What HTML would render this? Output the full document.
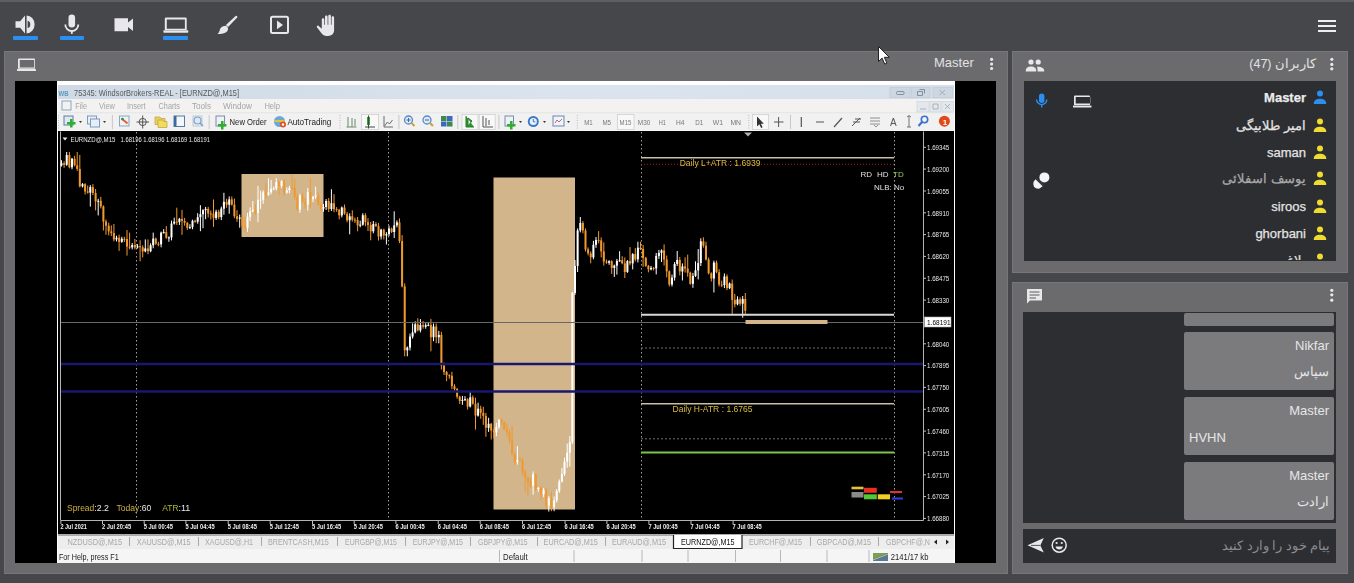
<!DOCTYPE html>
<html><head><meta charset="utf-8">
<style>
*{margin:0;padding:0;box-sizing:border-box}
html,body{width:1354px;height:583px;overflow:hidden;background:#46474b;font-family:"Liberation Sans",sans-serif}
.abs{position:absolute}
#topline{left:0;top:0;width:1354px;height:2px;background:#5d5e61}
.uline{height:4px;background:#2a8ff0;border-radius:1px}
.panel{background:#6b6b6e;border:1px solid #77777a}
.inner{background:#2d2e32}
.txt{color:#e6e6e6;white-space:nowrap}
.msg{background:#7b7b7e;border-radius:2px}
</style></head><body>
<div class="abs" id="topline"></div>

<!-- TOP BAR ICONS -->
<svg class="abs" style="left:0;top:0" width="400" height="50" viewBox="0 0 400 50">
 <g fill="#e8e8ea">
  <!-- speaker -->
  <path d="M15.5 21.3H20.2L25 15.6V33.4L20.2 27.8H15.5Z"/>
  <path d="M26.6 15.4A8 9 0 0 1 26.6 33.4Z M27.6 20.8A3.2 3.7 0 0 1 27.6 28.1Z" fill-rule="evenodd"/>
  <!-- mic -->
  <rect x="68.5" y="14.6" width="6.6" height="13" rx="3.3"/>
  <path d="M65.3 24.5a6.5 6.5 0 0 0 13 0" fill="none" stroke="#e8e8ea" stroke-width="1.8"/>
  <rect x="70.9" y="30.5" width="1.8" height="3.4"/>
  <!-- video -->
  <path d="M114.5 18.3h13.5v4.2l5-4v12.6l-5-4v4.1h-13.5z"/>
  <!-- laptop -->
  <path d="M166 17.5h19.5a1.2 1.2 0 0 1 1.2 1.2v11.2h-21.9v-11.2a1.2 1.2 0 0 1 1.2-1.2z M166.8 19.4v9.4h18.1v-9.4z" fill-rule="evenodd"/>
  <rect x="163.4" y="30.3" width="24.9" height="2.4" rx="0.6"/>
  <!-- brush -->
  <path d="M235.6 15.9c.9-.6 2.2.6 1.6 1.5l-9.1 9.7-2.2-2.1z"/>
  <path d="M224.7 25.9c1.9-.3 3.6 1.4 3.3 3.3-.4 2.8-3.4 4.8-10.5 4.8 2-1.4 1.9-3.5 2.8-5.4.7-1.5 2.5-2.5 4.4-2.7z"/>
  <!-- play box -->
  <rect x="271" y="16.7" width="17" height="16.4" rx="1.5" fill="none" stroke="#e8e8ea" stroke-width="2"/>
  <path d="M277 20.5l6 4.4-6 4.4z"/>
  <!-- hand -->
  <path transform="translate(1.5 0)" d="M320.3 28.8v-9.2c0-1.9 2.5-1.9 2.5 0v5.2h.7v-8c0-1.9 2.6-1.9 2.6 0v8h.7v-8.7c0-1.9 2.6-1.9 2.6 0v8.7h.7v-7.2c0-1.9 2.5-1.9 2.5 0v12.7c0 3.4-2.6 5.7-6 5.7h-1.6c-2 0-3.6-.8-4.8-2.4l-4.6-6.1c-.8-1.2.5-2.5 1.6-1.6z"/>
 </g>
</svg>
<div class="abs uline" style="left:13px;top:36px;width:25px"></div>
<div class="abs uline" style="left:60px;top:36px;width:24px"></div>
<div class="abs uline" style="left:163px;top:36px;width:25px"></div>
<!-- hamburger -->
<div class="abs" style="left:1318px;top:20px;width:18px;height:2px;background:#eee"></div>
<div class="abs" style="left:1318px;top:25px;width:18px;height:2px;background:#eee"></div>
<div class="abs" style="left:1318px;top:30px;width:18px;height:2px;background:#eee"></div>

<!-- MAIN PANEL -->
<div class="abs panel" style="left:4px;top:51px;width:1004px;height:523px"></div>
<svg class="abs" style="left:16px;top:56px" width="22" height="18" viewBox="0 0 22 18">
 <path d="M3 2.5h15a1 1 0 0 1 1 1v9.2h-17v-9.2a1 1 0 0 1 1-1z M3.8 4v7.4h14.4v-7.4z" fill="#e8e8ea" fill-rule="evenodd"/>
 <rect x="1" y="13" width="19" height="2" rx="0.5" fill="#e8e8ea"/>
</svg>
<div class="abs txt" style="left:934px;top:55px;font-size:13px;color:#e2e2e4">Master</div>
<svg class="abs" style="left:988px;top:56px" width="8" height="16"><g fill="#e8e8ea"><circle cx="3.6" cy="3.3" r="1.6"/><circle cx="3.6" cy="8" r="1.6"/><circle cx="3.6" cy="12.5" r="1.6"/></g></svg>
<div class="abs" style="left:15px;top:81px;width:981px;height:482px;background:#000"></div>

<!-- MT4 -->
<div class="abs" id="mt4" style="left:57px;top:81px;width:898px;height:482px;background:#fff;overflow:hidden;filter:blur(0.35px)">
<svg width="898" height="482" viewBox="57 81 898 482" style="position:absolute;left:0;top:0;font-family:'Liberation Sans',sans-serif">
<defs>
 <linearGradient id="tg" x1="0" x2="1" y1="0" y2="0"><stop offset="0" stop-color="#cfdae6"/><stop offset="0.6" stop-color="#dbe4ee"/><stop offset="1" stop-color="#d5dfea"/></linearGradient>
</defs>
<rect x="57" y="81" width="898" height="482" fill="#ffffff"/>
<!-- title bar -->
<rect x="58" y="85" width="896" height="14" fill="url(#tg)"/>
<text x="58.5" y="95.5" font-size="8" fill="#5a9ab8" font-weight="bold" textLength="10" lengthAdjust="spacingAndGlyphs">WB</text>
<text x="74" y="96" font-size="9.5" fill="#585858" textLength="165" lengthAdjust="spacingAndGlyphs">75345: WindsorBrokers-REAL - [EURNZD@,M15]</text>
<g fill="#cdd7e2" stroke="#bcc6d2" stroke-width="0.6">
 <rect x="890" y="87.3" width="20" height="10.5"/>
 <rect x="911.5" y="87.3" width="18.5" height="10.5"/>
 <rect x="933" y="87.3" width="19.5" height="10.5"/>
</g>
<rect x="896.5" y="91.5" width="7.5" height="3" rx="1" fill="none" stroke="#7d8896" stroke-width="0.9"/>
<path d="M917.5 91.5h5v4h-5z M919.5 89.5h5v4" fill="none" stroke="#7d8896" stroke-width="0.9"/>
<path d="M939.5 90l5.5 5M945 90l-5.5 5" stroke="#a5adb7" stroke-width="1"/>
<!-- menu bar -->
<rect x="58" y="99" width="896" height="13.5" fill="#f3f2f1"/>
<rect x="62" y="101" width="9" height="9" fill="none" stroke="#8aa6c4" stroke-width="1"/>
<g font-size="9.5" fill="#a5a5a5">
 <text x="75.3" y="109" textLength="11.7" lengthAdjust="spacingAndGlyphs">File</text><text x="99" y="109" textLength="16" lengthAdjust="spacingAndGlyphs">View</text><text x="127" y="109" textLength="18.6" lengthAdjust="spacingAndGlyphs">Insert</text><text x="158.6" y="109" textLength="21.4" lengthAdjust="spacingAndGlyphs">Charts</text><text x="192" y="109" textLength="19" lengthAdjust="spacingAndGlyphs">Tools</text><text x="223" y="109" textLength="29" lengthAdjust="spacingAndGlyphs">Window</text><text x="264.4" y="109" textLength="15.6" lengthAdjust="spacingAndGlyphs">Help</text>
</g>
<g fill="#e4e8ee" stroke="#c8d0da" stroke-width="0.6">
 <rect x="917" y="101.5" width="12" height="10.5"/><rect x="930" y="101.5" width="11" height="10.5"/><rect x="942" y="101.5" width="11.5" height="10.5"/>
</g>
<path d="M920 109h6M933 104h5v5h-5zM945 104l5 5M950 104l-5 5" stroke="#9aa3ad" stroke-width="0.8" fill="none"/>
<rect x="58" y="112.5" width="896" height="1" fill="#d8d8d8"/>
<!-- toolbar -->
<rect x="58" y="113.5" width="896" height="17" fill="#f1f1f1"/>
<g stroke="#bbb" stroke-width="1" stroke-dasharray="1 1.5"><line x1="58.5" y1="115" x2="58.5" y2="129"/><line x1="340" y1="115" x2="340" y2="129"/><line x1="577.3" y1="115" x2="577.3" y2="129"/><line x1="748.8" y1="115" x2="748.8" y2="129"/></g>
<g stroke="#c8c8c8" stroke-width="1"><line x1="112.4" y1="115" x2="112.4" y2="129"/><line x1="209.2" y1="115" x2="209.2" y2="129"/><line x1="398.9" y1="115" x2="398.9" y2="129"/><line x1="457.8" y1="115" x2="457.8" y2="129"/><line x1="498.9" y1="115" x2="498.9" y2="129"/><line x1="790.5" y1="115" x2="790.5" y2="129"/></g>
<!-- pressed boxes -->
<g fill="#f8f8f8" stroke="#cfcfcf" stroke-width="0.8">
<rect x="361.4" y="114.5" width="17.2" height="15"/><rect x="462" y="114.5" width="16" height="15"/><rect x="479.2" y="114.5" width="16" height="15"/><rect x="617.5" y="114.5" width="16.5" height="15"/><rect x="752.4" y="114.5" width="16" height="15"/>
</g>
<!-- icon1 new chart -->
<rect x="64" y="116" width="9" height="9" fill="#dfe9f3" stroke="#5c7fa8" stroke-width="1"/>
<path d="M70 119h2.5v3h3v2.5h-3v3H70v-3h-3v-2.5h3z" fill="#2fae2f"/>
<path d="M79 121h3l-1.5 2z M103 121h3l-1.5 2z M519 121h3l-1.5 2z M543 121h3l-1.5 2z M567 121h3l-1.5 2z" fill="#333"/>
<rect x="87.5" y="116" width="9" height="8" fill="#e7eef6" stroke="#7d9ac0" stroke-width="1"/>
<rect x="90.5" y="119" width="9" height="8" fill="#e7eef6" stroke="#7d9ac0" stroke-width="1"/>
<rect x="119.5" y="116" width="9.5" height="10" fill="#eef3f8" stroke="#8aa5c4" stroke-width="1"/>
<path d="M121.5 118.5l6 5" stroke="#e5602a" stroke-width="2"/><circle cx="122.5" cy="119" r="1.3" fill="#2a9a3a"/>
<path d="M142.7 115.5v13M136.5 122h12.5" stroke="#555" stroke-width="1"/><circle cx="142.7" cy="122" r="3.6" fill="none" stroke="#555" stroke-width="1"/>
<path d="M155 117h5l1 1.5h4v6h-10z" fill="#e8d060" stroke="#c0a030" stroke-width="0.7"/><path d="M158 120h5l1 1.5h3v6h-9z" fill="#f0dc60" stroke="#c0a030" stroke-width="0.7"/>
<rect x="174" y="116" width="10.5" height="10.5" fill="#f4f7fa" stroke="#5a7aa0" stroke-width="1"/><rect x="174" y="116" width="2.5" height="10.5" fill="#3d6aa0"/>
<circle cx="197.5" cy="120.5" r="3.5" fill="#dce8f4" stroke="#7aa0c8" stroke-width="1.2"/><path d="M200 123l3 3" stroke="#7aa0c8" stroke-width="1.6"/><rect x="193" y="116" width="9" height="10" fill="none" stroke="#9ab0c8" stroke-width="0.6"/>
<!-- new order -->
<rect x="216" y="116" width="8.5" height="10" fill="#eef1f5" stroke="#7a8ea8" stroke-width="1"/>
<path d="M221 121h2.5v3h3v2.5h-3v3H221v-3h-3v-2.5h3z" fill="#2fae2f"/>
<text x="229.6" y="125" font-size="9.5" fill="#222" textLength="37" lengthAdjust="spacingAndGlyphs">New Order</text>
<circle cx="279.5" cy="121.5" r="5.5" fill="#6aa8d8"/><path d="M274.5 121h10" stroke="#e8c040" stroke-width="2"/><circle cx="283" cy="124.5" r="3" fill="#e05020"/><circle cx="283" cy="124.5" r="1.2" fill="#fff"/>
<text x="287.4" y="125" font-size="9.5" fill="#222" textLength="44" lengthAdjust="spacingAndGlyphs">AutoTrading</text>
<!-- chart types -->
<path d="M348 117v10M352 118v9M355 119v7M346.5 127h10" stroke="#6a8a6a" stroke-width="1" fill="none"/>
<rect x="367" y="117" width="3" height="8" fill="#30a030"/><path d="M368.5 115.5v13M365 127h10" stroke="#444" stroke-width="1"/>
<path d="M384 116v11h9M384.5 126l3-4 2 2 3-4" stroke="#6a6a6a" stroke-width="1" fill="none"/>
<circle cx="408.5" cy="120" r="4" fill="#dbe8f6" stroke="#5a8ac8" stroke-width="1.3"/><path d="M411.5 123l3 3" stroke="#d0a030" stroke-width="2"/><path d="M406.5 120h4M408.5 118v4" stroke="#3a6ab0" stroke-width="1"/>
<circle cx="427" cy="120" r="4" fill="#dbe8f6" stroke="#5a8ac8" stroke-width="1.3"/><path d="M430 123l3 3" stroke="#d0a030" stroke-width="2"/><path d="M425 120h4" stroke="#3a6ab0" stroke-width="1"/>
<rect x="441" y="116" width="5.5" height="5" fill="#3a8a4a"/><rect x="447" y="116" width="5.5" height="5" fill="#3a6ac0"/><rect x="441" y="121.5" width="5.5" height="5" fill="#3a6ac0"/><rect x="447" y="121.5" width="5.5" height="5" fill="#3a8a4a"/>
<path d="M466 116v11h8M468 126v-8l4 3z" stroke="#2a7a2a" stroke-width="1" fill="#2a9a2a"/>
<path d="M483 116v11h10M486 118v8M489 120v5" stroke="#555" stroke-width="1" fill="none"/>
<!-- new doc / clock / template -->
<rect x="505" y="116" width="8.5" height="10" fill="#eef1f5" stroke="#7a8ea8" stroke-width="1"/>
<path d="M510 121h2.5v3h3v2.5h-3v3H510v-3h-3v-2.5h3z" fill="#2fae2f"/>
<circle cx="533.3" cy="121.5" r="5.5" fill="#3a78c8"/><circle cx="533.3" cy="121.5" r="3.6" fill="#e8f0fa"/><path d="M533.3 119v2.8h2" stroke="#3a78c8" stroke-width="1" fill="none"/>
<rect x="553" y="116" width="11" height="10" fill="#f0f4f8" stroke="#6a88b0" stroke-width="1"/><path d="M555 123l2-3 2 2 3-3" stroke="#c04040" stroke-width="0.8" fill="none"/>
<!-- timeframes -->
<g font-size="8" fill="#777">
<text x="584.2" y="124.5" textLength="8.5" lengthAdjust="spacingAndGlyphs">M1</text><text x="602.4" y="124.5" textLength="8.6" lengthAdjust="spacingAndGlyphs">M5</text><text x="619.6" y="124.5" textLength="11.8" lengthAdjust="spacingAndGlyphs">M15</text><text x="637.8" y="124.5" textLength="12.5" lengthAdjust="spacingAndGlyphs">M30</text><text x="658.8" y="124.5" textLength="7.2" lengthAdjust="spacingAndGlyphs">H1</text><text x="676" y="124.5" textLength="8.5" lengthAdjust="spacingAndGlyphs">H4</text><text x="695.2" y="124.5" textLength="8" lengthAdjust="spacingAndGlyphs">D1</text><text x="712.8" y="124.5" textLength="10.2" lengthAdjust="spacingAndGlyphs">W1</text><text x="730.4" y="124.5" textLength="10.6" lengthAdjust="spacingAndGlyphs">MN</text>
</g>
<path d="M757 116.5v10l2.3-2.2 1.8 3.6 1.5-.7-1.7-3.5h3z" fill="#333"/>
<path d="M778.6 117v10M774 122h9.5" stroke="#555" stroke-width="1"/>
<path d="M801.3 117v10M816 122h8M834 127l8-9" stroke="#555" stroke-width="1.2"/>
<path d="M852 126l8-8M853 122h7M855 119h6" stroke="#555" stroke-width="1"/>
<path d="M870 118h10M870 121h10M870 124h10M874 125l2 2 2-2" stroke="#777" stroke-width="0.8" fill="none"/>
<text x="890" y="126" font-size="10" fill="#555">A</text>
<path d="M907 117l2-1.5 2 1.5M909 116v11M907 127h4" stroke="#666" stroke-width="0.9" fill="none"/>
<circle cx="924.5" cy="119.5" r="3.2" fill="none" stroke="#3a70d0" stroke-width="1.6"/><path d="M922 122l-3.5 4" stroke="#3a70d0" stroke-width="2"/>
<circle cx="944.4" cy="121.2" r="5.5" fill="#e04a1a"/><text x="942.8" y="124.5" font-size="8" font-weight="bold" fill="#fff">1</text>

<!-- chart -->
<rect x="58" y="131" width="896" height="403" fill="#000"/>
<path d="M60.5 131.5V520.5H923.5V131.5" fill="none" stroke="#b4b4b4" stroke-width="1"/>
<!-- dotted verticals -->
<g stroke="#a0a0a0" stroke-width="1" stroke-dasharray="1.5 2.5">
 <line x1="136.5" y1="132" x2="136.5" y2="520"/><line x1="388.5" y1="132" x2="388.5" y2="520"/><line x1="641.5" y1="132" x2="641.5" y2="520"/><line x1="894.5" y1="132" x2="894.5" y2="520"/>
</g>
<!-- tan rects -->
<rect x="241.5" y="174" width="82" height="63" fill="#d3b58c"/>
<rect x="493.5" y="177.5" width="81.5" height="332" fill="#d3b58c"/>
<!-- candles -->
<rect x="61.0" y="160.2" width="1" height="6.3" fill="#ffffff"/>
<rect x="60.5" y="163.2" width="2" height="2.3" fill="#ffffff"/>
<rect x="63.6" y="161.2" width="1" height="6.6" fill="#f0992e"/>
<rect x="63.1" y="163.2" width="2" height="1.6" fill="#f0992e"/>
<rect x="66.2" y="152.0" width="1" height="13.8" fill="#ffffff"/>
<rect x="65.7" y="155.0" width="2" height="9.9" fill="#ffffff"/>
<rect x="68.9" y="152.0" width="1" height="16.3" fill="#f0992e"/>
<rect x="68.4" y="155.0" width="2" height="12.3" fill="#f0992e"/>
<rect x="71.5" y="157.8" width="1" height="11.5" fill="#ffffff"/>
<rect x="71.0" y="158.8" width="2" height="8.5" fill="#ffffff"/>
<rect x="74.1" y="155.8" width="1" height="10.5" fill="#f0992e"/>
<rect x="73.6" y="158.8" width="2" height="6.5" fill="#f0992e"/>
<rect x="76.7" y="152.0" width="1" height="18.9" fill="#f0992e"/>
<rect x="76.2" y="165.3" width="2" height="3.6" fill="#f0992e"/>
<rect x="79.3" y="154.9" width="1" height="32.5" fill="#f0992e"/>
<rect x="78.8" y="168.9" width="2" height="17.5" fill="#f0992e"/>
<rect x="82.0" y="183.1" width="1" height="4.3" fill="#ffffff"/>
<rect x="81.5" y="184.1" width="2" height="2.3" fill="#ffffff"/>
<rect x="84.6" y="183.1" width="1" height="11.4" fill="#f0992e"/>
<rect x="84.1" y="184.1" width="2" height="7.4" fill="#f0992e"/>
<rect x="87.2" y="185.5" width="1" height="8.1" fill="#f0992e"/>
<rect x="86.7" y="191.5" width="2" height="1.1" fill="#f0992e"/>
<rect x="89.8" y="185.1" width="1" height="21.5" fill="#ffffff"/>
<rect x="89.3" y="187.1" width="2" height="5.5" fill="#ffffff"/>
<rect x="92.4" y="184.1" width="1" height="10.9" fill="#f0992e"/>
<rect x="91.9" y="187.1" width="2" height="5.9" fill="#f0992e"/>
<rect x="95.1" y="189.0" width="1" height="21.4" fill="#f0992e"/>
<rect x="94.6" y="193.0" width="2" height="8.4" fill="#f0992e"/>
<rect x="97.7" y="198.8" width="1" height="16.6" fill="#ffffff"/>
<rect x="97.2" y="200.8" width="2" height="1.0" fill="#ffffff"/>
<rect x="100.3" y="196.8" width="1" height="11.6" fill="#f0992e"/>
<rect x="99.8" y="200.8" width="2" height="5.6" fill="#f0992e"/>
<rect x="102.9" y="205.4" width="1" height="25.1" fill="#f0992e"/>
<rect x="102.4" y="206.4" width="2" height="15.1" fill="#f0992e"/>
<rect x="105.5" y="219.5" width="1" height="15.2" fill="#f0992e"/>
<rect x="105.0" y="221.5" width="2" height="4.2" fill="#f0992e"/>
<rect x="108.2" y="222.7" width="1" height="12.7" fill="#f0992e"/>
<rect x="107.7" y="225.7" width="2" height="5.7" fill="#f0992e"/>
<rect x="110.8" y="225.4" width="1" height="10.7" fill="#f0992e"/>
<rect x="110.3" y="231.4" width="2" height="1.7" fill="#f0992e"/>
<rect x="113.4" y="224.0" width="1" height="17.4" fill="#f0992e"/>
<rect x="112.9" y="233.0" width="2" height="6.4" fill="#f0992e"/>
<rect x="116.0" y="235.7" width="1" height="5.7" fill="#ffffff"/>
<rect x="115.5" y="237.7" width="2" height="1.7" fill="#ffffff"/>
<rect x="118.6" y="234.7" width="1" height="16.2" fill="#f0992e"/>
<rect x="118.1" y="237.7" width="2" height="4.2" fill="#f0992e"/>
<rect x="121.3" y="236.8" width="1" height="6.0" fill="#ffffff"/>
<rect x="120.8" y="238.8" width="2" height="3.0" fill="#ffffff"/>
<rect x="123.9" y="236.8" width="1" height="5.2" fill="#f0992e"/>
<rect x="123.4" y="238.8" width="2" height="1.0" fill="#f0992e"/>
<rect x="126.5" y="230.0" width="1" height="25.6" fill="#f0992e"/>
<rect x="126.0" y="239.0" width="2" height="7.6" fill="#f0992e"/>
<rect x="129.1" y="232.6" width="1" height="16.7" fill="#f0992e"/>
<rect x="128.6" y="246.6" width="2" height="1.0" fill="#f0992e"/>
<rect x="131.7" y="243.0" width="1" height="6.4" fill="#ffffff"/>
<rect x="131.2" y="245.0" width="2" height="2.4" fill="#ffffff"/>
<rect x="134.4" y="239.0" width="1" height="10.5" fill="#f0992e"/>
<rect x="133.9" y="245.0" width="2" height="2.5" fill="#f0992e"/>
<rect x="137.0" y="244.2" width="1" height="4.3" fill="#ffffff"/>
<rect x="136.5" y="246.2" width="2" height="1.3" fill="#ffffff"/>
<rect x="139.6" y="240.2" width="1" height="21.1" fill="#f0992e"/>
<rect x="139.1" y="246.2" width="2" height="1.1" fill="#f0992e"/>
<rect x="142.2" y="245.3" width="1" height="12.1" fill="#f0992e"/>
<rect x="141.7" y="247.3" width="2" height="4.1" fill="#f0992e"/>
<rect x="144.8" y="239.4" width="1" height="12.9" fill="#ffffff"/>
<rect x="144.3" y="248.4" width="2" height="2.9" fill="#ffffff"/>
<rect x="147.5" y="239.4" width="1" height="14.8" fill="#f0992e"/>
<rect x="147.0" y="248.4" width="2" height="2.8" fill="#f0992e"/>
<rect x="150.1" y="243.3" width="1" height="8.9" fill="#ffffff"/>
<rect x="149.6" y="245.3" width="2" height="5.9" fill="#ffffff"/>
<rect x="152.7" y="232.6" width="1" height="15.7" fill="#ffffff"/>
<rect x="152.2" y="238.6" width="2" height="6.7" fill="#ffffff"/>
<rect x="155.3" y="237.6" width="1" height="7.2" fill="#f0992e"/>
<rect x="154.8" y="238.6" width="2" height="5.2" fill="#f0992e"/>
<rect x="157.9" y="241.8" width="1" height="4.5" fill="#f0992e"/>
<rect x="157.4" y="243.8" width="2" height="1.0" fill="#f0992e"/>
<rect x="160.6" y="231.6" width="1" height="15.7" fill="#ffffff"/>
<rect x="160.1" y="232.6" width="2" height="11.7" fill="#ffffff"/>
<rect x="163.2" y="229.1" width="1" height="4.5" fill="#ffffff"/>
<rect x="162.7" y="232.1" width="2" height="1.0" fill="#ffffff"/>
<rect x="165.8" y="226.1" width="1" height="12.7" fill="#f0992e"/>
<rect x="165.3" y="232.1" width="2" height="5.7" fill="#f0992e"/>
<rect x="168.4" y="236.4" width="1" height="5.4" fill="#ffffff"/>
<rect x="167.9" y="237.4" width="2" height="1.0" fill="#ffffff"/>
<rect x="171.0" y="220.6" width="1" height="19.8" fill="#ffffff"/>
<rect x="170.5" y="223.6" width="2" height="13.8" fill="#ffffff"/>
<rect x="173.7" y="217.7" width="1" height="6.9" fill="#ffffff"/>
<rect x="173.2" y="221.7" width="2" height="1.9" fill="#ffffff"/>
<rect x="176.3" y="207.7" width="1" height="17.3" fill="#f0992e"/>
<rect x="175.8" y="221.7" width="2" height="1.0" fill="#f0992e"/>
<rect x="178.9" y="217.9" width="1" height="7.1" fill="#ffffff"/>
<rect x="178.4" y="218.9" width="2" height="3.1" fill="#ffffff"/>
<rect x="181.5" y="209.9" width="1" height="25.0" fill="#f0992e"/>
<rect x="181.0" y="218.9" width="2" height="2.0" fill="#f0992e"/>
<rect x="184.1" y="217.9" width="1" height="7.9" fill="#f0992e"/>
<rect x="183.6" y="220.9" width="2" height="1.9" fill="#f0992e"/>
<rect x="186.8" y="221.9" width="1" height="8.0" fill="#f0992e"/>
<rect x="186.3" y="222.9" width="2" height="5.0" fill="#f0992e"/>
<rect x="189.4" y="224.2" width="1" height="4.7" fill="#ffffff"/>
<rect x="188.9" y="227.2" width="2" height="1.0" fill="#ffffff"/>
<rect x="192.0" y="219.7" width="1" height="9.5" fill="#ffffff"/>
<rect x="191.5" y="220.7" width="2" height="6.5" fill="#ffffff"/>
<rect x="194.6" y="219.7" width="1" height="3.1" fill="#f0992e"/>
<rect x="194.1" y="220.7" width="2" height="1.1" fill="#f0992e"/>
<rect x="197.2" y="213.2" width="1" height="10.5" fill="#ffffff"/>
<rect x="196.7" y="217.2" width="2" height="4.5" fill="#ffffff"/>
<rect x="199.9" y="205.2" width="1" height="26.0" fill="#ffffff"/>
<rect x="199.4" y="214.2" width="2" height="3.0" fill="#ffffff"/>
<rect x="202.5" y="209.2" width="1" height="19.0" fill="#ffffff"/>
<rect x="202.0" y="210.2" width="2" height="4.0" fill="#ffffff"/>
<rect x="205.1" y="206.9" width="1" height="12.3" fill="#ffffff"/>
<rect x="204.6" y="208.9" width="2" height="1.3" fill="#ffffff"/>
<rect x="207.7" y="206.9" width="1" height="10.6" fill="#f0992e"/>
<rect x="207.2" y="208.9" width="2" height="4.6" fill="#f0992e"/>
<rect x="210.3" y="210.5" width="1" height="9.0" fill="#f0992e"/>
<rect x="209.8" y="213.5" width="2" height="1.0" fill="#f0992e"/>
<rect x="213.0" y="199.5" width="1" height="27.4" fill="#f0992e"/>
<rect x="212.5" y="213.5" width="2" height="4.4" fill="#f0992e"/>
<rect x="215.6" y="209.7" width="1" height="10.3" fill="#ffffff"/>
<rect x="215.1" y="211.7" width="2" height="6.3" fill="#ffffff"/>
<rect x="218.2" y="209.7" width="1" height="9.5" fill="#f0992e"/>
<rect x="217.7" y="211.7" width="2" height="5.5" fill="#f0992e"/>
<rect x="220.8" y="206.6" width="1" height="13.5" fill="#ffffff"/>
<rect x="220.3" y="208.6" width="2" height="8.5" fill="#ffffff"/>
<rect x="223.4" y="192.8" width="1" height="21.9" fill="#ffffff"/>
<rect x="222.9" y="201.8" width="2" height="6.9" fill="#ffffff"/>
<rect x="226.1" y="198.8" width="1" height="9.0" fill="#f0992e"/>
<rect x="225.6" y="201.8" width="2" height="3.0" fill="#f0992e"/>
<rect x="228.7" y="196.4" width="1" height="17.3" fill="#ffffff"/>
<rect x="228.2" y="199.4" width="2" height="5.3" fill="#ffffff"/>
<rect x="231.3" y="196.4" width="1" height="9.2" fill="#f0992e"/>
<rect x="230.8" y="199.4" width="2" height="5.2" fill="#f0992e"/>
<rect x="233.9" y="198.6" width="1" height="19.6" fill="#f0992e"/>
<rect x="233.4" y="204.6" width="2" height="11.6" fill="#f0992e"/>
<rect x="236.5" y="210.2" width="1" height="11.6" fill="#f0992e"/>
<rect x="236.0" y="216.2" width="2" height="2.6" fill="#f0992e"/>
<rect x="239.2" y="214.5" width="1" height="13.2" fill="#ffffff"/>
<rect x="238.7" y="217.5" width="2" height="1.2" fill="#ffffff"/>
<rect x="241.8" y="214.5" width="1" height="14.2" fill="#f0992e"/>
<rect x="241.3" y="217.5" width="2" height="8.2" fill="#f0992e"/>
<rect x="244.4" y="216.7" width="1" height="15.1" fill="#f0992e"/>
<rect x="243.9" y="225.7" width="2" height="2.1" fill="#f0992e"/>
<rect x="247.0" y="212.8" width="1" height="19.0" fill="#ffffff"/>
<rect x="246.5" y="216.8" width="2" height="11.0" fill="#ffffff"/>
<rect x="249.6" y="207.3" width="1" height="13.6" fill="#ffffff"/>
<rect x="249.1" y="211.3" width="2" height="5.6" fill="#ffffff"/>
<rect x="252.3" y="201.0" width="1" height="11.3" fill="#ffffff"/>
<rect x="251.8" y="210.0" width="2" height="1.3" fill="#ffffff"/>
<rect x="254.9" y="204.0" width="1" height="11.0" fill="#f0992e"/>
<rect x="254.4" y="210.0" width="2" height="3.0" fill="#f0992e"/>
<rect x="257.5" y="185.9" width="1" height="36.2" fill="#ffffff"/>
<rect x="257.0" y="199.9" width="2" height="13.2" fill="#ffffff"/>
<rect x="260.1" y="190.7" width="1" height="18.2" fill="#ffffff"/>
<rect x="259.6" y="199.7" width="2" height="1.0" fill="#ffffff"/>
<rect x="262.7" y="190.3" width="1" height="13.4" fill="#ffffff"/>
<rect x="262.2" y="192.3" width="2" height="7.4" fill="#ffffff"/>
<rect x="265.4" y="183.3" width="1" height="15.4" fill="#f0992e"/>
<rect x="264.9" y="192.3" width="2" height="2.4" fill="#f0992e"/>
<rect x="268.0" y="178.2" width="1" height="17.6" fill="#ffffff"/>
<rect x="267.5" y="192.2" width="2" height="2.6" fill="#ffffff"/>
<rect x="270.6" y="179.9" width="1" height="14.3" fill="#ffffff"/>
<rect x="270.1" y="188.9" width="2" height="3.3" fill="#ffffff"/>
<rect x="273.2" y="186.6" width="1" height="3.3" fill="#ffffff"/>
<rect x="272.7" y="188.6" width="2" height="1.0" fill="#ffffff"/>
<rect x="275.8" y="178.1" width="1" height="12.4" fill="#ffffff"/>
<rect x="275.3" y="182.1" width="2" height="6.4" fill="#ffffff"/>
<rect x="278.5" y="181.1" width="1" height="13.9" fill="#f0992e"/>
<rect x="278.0" y="182.1" width="2" height="3.9" fill="#f0992e"/>
<rect x="281.1" y="180.2" width="1" height="7.8" fill="#ffffff"/>
<rect x="280.6" y="181.2" width="2" height="4.8" fill="#ffffff"/>
<rect x="283.7" y="179.2" width="1" height="16.3" fill="#f0992e"/>
<rect x="283.2" y="181.2" width="2" height="11.3" fill="#f0992e"/>
<rect x="286.3" y="187.3" width="1" height="6.3" fill="#ffffff"/>
<rect x="285.8" y="190.3" width="2" height="2.3" fill="#ffffff"/>
<rect x="288.9" y="185.9" width="1" height="7.3" fill="#ffffff"/>
<rect x="288.4" y="187.9" width="2" height="2.3" fill="#ffffff"/>
<rect x="291.6" y="173.9" width="1" height="16.0" fill="#f0992e"/>
<rect x="291.1" y="187.9" width="2" height="1.0" fill="#f0992e"/>
<rect x="294.2" y="179.0" width="1" height="21.0" fill="#f0992e"/>
<rect x="293.7" y="188.0" width="2" height="9.0" fill="#f0992e"/>
<rect x="296.8" y="194.0" width="1" height="16.8" fill="#f0992e"/>
<rect x="296.3" y="197.0" width="2" height="12.8" fill="#f0992e"/>
<rect x="299.4" y="193.7" width="1" height="19.2" fill="#ffffff"/>
<rect x="298.9" y="195.7" width="2" height="14.2" fill="#ffffff"/>
<rect x="302.0" y="192.7" width="1" height="10.3" fill="#f0992e"/>
<rect x="301.5" y="195.7" width="2" height="6.3" fill="#f0992e"/>
<rect x="304.7" y="198.0" width="1" height="10.6" fill="#f0992e"/>
<rect x="304.2" y="202.0" width="2" height="2.6" fill="#f0992e"/>
<rect x="307.3" y="188.1" width="1" height="22.5" fill="#ffffff"/>
<rect x="306.8" y="192.1" width="2" height="12.5" fill="#ffffff"/>
<rect x="309.9" y="178.1" width="1" height="30.0" fill="#f0992e"/>
<rect x="309.4" y="192.1" width="2" height="7.0" fill="#f0992e"/>
<rect x="312.5" y="195.9" width="1" height="6.3" fill="#ffffff"/>
<rect x="312.0" y="196.9" width="2" height="2.3" fill="#ffffff"/>
<rect x="315.1" y="186.6" width="1" height="12.3" fill="#ffffff"/>
<rect x="314.6" y="195.6" width="2" height="1.3" fill="#ffffff"/>
<rect x="317.8" y="192.6" width="1" height="13.1" fill="#f0992e"/>
<rect x="317.3" y="195.6" width="2" height="9.1" fill="#f0992e"/>
<rect x="320.4" y="201.7" width="1" height="10.0" fill="#f0992e"/>
<rect x="319.9" y="204.7" width="2" height="4.0" fill="#f0992e"/>
<rect x="323.0" y="204.0" width="1" height="7.7" fill="#ffffff"/>
<rect x="322.5" y="207.0" width="2" height="1.7" fill="#ffffff"/>
<rect x="325.6" y="199.0" width="1" height="11.0" fill="#ffffff"/>
<rect x="325.1" y="201.0" width="2" height="6.0" fill="#ffffff"/>
<rect x="328.2" y="198.0" width="1" height="14.0" fill="#f0992e"/>
<rect x="327.7" y="201.0" width="2" height="8.0" fill="#f0992e"/>
<rect x="330.9" y="189.2" width="1" height="21.8" fill="#ffffff"/>
<rect x="330.4" y="203.2" width="2" height="5.8" fill="#ffffff"/>
<rect x="333.5" y="194.2" width="1" height="18.0" fill="#f0992e"/>
<rect x="333.0" y="203.2" width="2" height="6.0" fill="#f0992e"/>
<rect x="336.1" y="207.1" width="1" height="4.7" fill="#f0992e"/>
<rect x="335.6" y="209.1" width="2" height="1.0" fill="#f0992e"/>
<rect x="338.7" y="208.8" width="1" height="10.6" fill="#f0992e"/>
<rect x="338.2" y="209.8" width="2" height="5.6" fill="#f0992e"/>
<rect x="341.3" y="206.5" width="1" height="10.9" fill="#ffffff"/>
<rect x="340.8" y="207.5" width="2" height="7.9" fill="#ffffff"/>
<rect x="344.0" y="204.5" width="1" height="10.3" fill="#f0992e"/>
<rect x="343.5" y="207.5" width="2" height="6.3" fill="#f0992e"/>
<rect x="346.6" y="211.9" width="1" height="10.4" fill="#f0992e"/>
<rect x="346.1" y="213.9" width="2" height="6.4" fill="#f0992e"/>
<rect x="349.2" y="213.3" width="1" height="21.0" fill="#ffffff"/>
<rect x="348.7" y="216.3" width="2" height="4.0" fill="#ffffff"/>
<rect x="351.8" y="210.3" width="1" height="11.3" fill="#f0992e"/>
<rect x="351.3" y="216.3" width="2" height="3.3" fill="#f0992e"/>
<rect x="354.4" y="217.6" width="1" height="5.4" fill="#f0992e"/>
<rect x="353.9" y="219.6" width="2" height="1.0" fill="#f0992e"/>
<rect x="357.1" y="217.0" width="1" height="14.3" fill="#f0992e"/>
<rect x="356.6" y="220.0" width="2" height="5.3" fill="#f0992e"/>
<rect x="359.7" y="220.7" width="1" height="6.6" fill="#ffffff"/>
<rect x="359.2" y="224.7" width="2" height="1.0" fill="#ffffff"/>
<rect x="362.3" y="213.2" width="1" height="12.5" fill="#ffffff"/>
<rect x="361.8" y="215.2" width="2" height="9.5" fill="#ffffff"/>
<rect x="364.9" y="213.2" width="1" height="13.0" fill="#f0992e"/>
<rect x="364.4" y="215.2" width="2" height="7.0" fill="#f0992e"/>
<rect x="367.5" y="218.2" width="1" height="12.8" fill="#f0992e"/>
<rect x="367.0" y="222.2" width="2" height="2.8" fill="#f0992e"/>
<rect x="370.2" y="222.0" width="1" height="18.3" fill="#f0992e"/>
<rect x="369.7" y="225.0" width="2" height="6.3" fill="#f0992e"/>
<rect x="372.8" y="221.0" width="1" height="12.3" fill="#ffffff"/>
<rect x="372.3" y="224.0" width="2" height="7.3" fill="#ffffff"/>
<rect x="375.4" y="222.0" width="1" height="5.0" fill="#f0992e"/>
<rect x="374.9" y="224.0" width="2" height="2.0" fill="#f0992e"/>
<rect x="378.0" y="222.9" width="1" height="17.6" fill="#f0992e"/>
<rect x="377.5" y="225.9" width="2" height="10.6" fill="#f0992e"/>
<rect x="380.6" y="228.7" width="1" height="10.8" fill="#ffffff"/>
<rect x="380.1" y="229.7" width="2" height="6.8" fill="#ffffff"/>
<rect x="383.3" y="228.7" width="1" height="10.8" fill="#f0992e"/>
<rect x="382.8" y="229.7" width="2" height="5.8" fill="#f0992e"/>
<rect x="385.9" y="232.1" width="1" height="12.4" fill="#ffffff"/>
<rect x="385.4" y="234.1" width="2" height="1.4" fill="#ffffff"/>
<rect x="388.5" y="225.6" width="1" height="10.5" fill="#ffffff"/>
<rect x="388.0" y="228.6" width="2" height="5.5" fill="#ffffff"/>
<rect x="391.1" y="227.6" width="1" height="5.4" fill="#f0992e"/>
<rect x="390.6" y="228.6" width="2" height="3.4" fill="#f0992e"/>
<rect x="393.7" y="211.3" width="1" height="26.7" fill="#ffffff"/>
<rect x="393.2" y="225.3" width="2" height="6.7" fill="#ffffff"/>
<rect x="396.4" y="220.4" width="1" height="6.9" fill="#ffffff"/>
<rect x="395.9" y="222.4" width="2" height="2.9" fill="#ffffff"/>
<rect x="399.0" y="218.4" width="1" height="24.7" fill="#f0992e"/>
<rect x="398.5" y="222.4" width="2" height="18.7" fill="#f0992e"/>
<rect x="401.6" y="235.1" width="1" height="52.3" fill="#f0992e"/>
<rect x="401.1" y="241.1" width="2" height="45.3" fill="#f0992e"/>
<rect x="404.2" y="283.4" width="1" height="72.9" fill="#f0992e"/>
<rect x="403.7" y="286.4" width="2" height="63.9" fill="#f0992e"/>
<rect x="406.8" y="346.5" width="1" height="9.8" fill="#ffffff"/>
<rect x="406.3" y="347.5" width="2" height="2.8" fill="#ffffff"/>
<rect x="409.5" y="333.6" width="1" height="16.9" fill="#ffffff"/>
<rect x="409.0" y="336.6" width="2" height="10.9" fill="#ffffff"/>
<rect x="412.1" y="323.4" width="1" height="15.2" fill="#ffffff"/>
<rect x="411.6" y="332.4" width="2" height="4.2" fill="#ffffff"/>
<rect x="414.7" y="321.3" width="1" height="12.1" fill="#ffffff"/>
<rect x="414.2" y="324.3" width="2" height="8.1" fill="#ffffff"/>
<rect x="417.3" y="318.3" width="1" height="13.1" fill="#f0992e"/>
<rect x="416.8" y="324.3" width="2" height="6.1" fill="#f0992e"/>
<rect x="419.9" y="319.1" width="1" height="13.3" fill="#ffffff"/>
<rect x="419.4" y="325.1" width="2" height="5.3" fill="#ffffff"/>
<rect x="422.6" y="321.1" width="1" height="7.6" fill="#f0992e"/>
<rect x="422.1" y="325.1" width="2" height="1.6" fill="#f0992e"/>
<rect x="425.2" y="323.2" width="1" height="5.5" fill="#ffffff"/>
<rect x="424.7" y="325.2" width="2" height="1.5" fill="#ffffff"/>
<rect x="427.8" y="321.9" width="1" height="4.3" fill="#ffffff"/>
<rect x="427.3" y="324.9" width="2" height="1.0" fill="#ffffff"/>
<rect x="430.4" y="318.9" width="1" height="32.4" fill="#f0992e"/>
<rect x="429.9" y="324.9" width="2" height="12.4" fill="#f0992e"/>
<rect x="433.0" y="323.5" width="1" height="17.7" fill="#ffffff"/>
<rect x="432.5" y="326.5" width="2" height="10.7" fill="#ffffff"/>
<rect x="435.7" y="323.5" width="1" height="19.7" fill="#f0992e"/>
<rect x="435.2" y="326.5" width="2" height="10.7" fill="#f0992e"/>
<rect x="438.3" y="330.9" width="1" height="12.4" fill="#ffffff"/>
<rect x="437.8" y="334.9" width="2" height="2.4" fill="#ffffff"/>
<rect x="440.9" y="331.9" width="1" height="37.7" fill="#f0992e"/>
<rect x="440.4" y="334.9" width="2" height="30.7" fill="#f0992e"/>
<rect x="443.5" y="362.6" width="1" height="12.4" fill="#f0992e"/>
<rect x="443.0" y="365.6" width="2" height="6.4" fill="#f0992e"/>
<rect x="446.1" y="371.0" width="1" height="10.2" fill="#f0992e"/>
<rect x="445.6" y="372.0" width="2" height="3.2" fill="#f0992e"/>
<rect x="448.8" y="374.2" width="1" height="4.6" fill="#f0992e"/>
<rect x="448.3" y="375.2" width="2" height="1.0" fill="#f0992e"/>
<rect x="451.4" y="371.8" width="1" height="17.4" fill="#f0992e"/>
<rect x="450.9" y="375.8" width="2" height="10.4" fill="#f0992e"/>
<rect x="454.0" y="384.2" width="1" height="6.8" fill="#f0992e"/>
<rect x="453.5" y="386.2" width="2" height="2.8" fill="#f0992e"/>
<rect x="456.6" y="388.0" width="1" height="10.7" fill="#f0992e"/>
<rect x="456.1" y="389.0" width="2" height="7.7" fill="#f0992e"/>
<rect x="459.2" y="395.7" width="1" height="8.2" fill="#f0992e"/>
<rect x="458.7" y="396.7" width="2" height="4.2" fill="#f0992e"/>
<rect x="461.9" y="395.9" width="1" height="8.9" fill="#ffffff"/>
<rect x="461.4" y="399.9" width="2" height="1.0" fill="#ffffff"/>
<rect x="464.5" y="396.2" width="1" height="4.7" fill="#ffffff"/>
<rect x="464.0" y="399.2" width="2" height="1.0" fill="#ffffff"/>
<rect x="467.1" y="398.2" width="1" height="11.3" fill="#f0992e"/>
<rect x="466.6" y="399.2" width="2" height="7.3" fill="#f0992e"/>
<rect x="469.7" y="391.4" width="1" height="16.1" fill="#ffffff"/>
<rect x="469.2" y="397.4" width="2" height="9.1" fill="#ffffff"/>
<rect x="472.3" y="395.4" width="1" height="9.3" fill="#f0992e"/>
<rect x="471.8" y="397.4" width="2" height="6.3" fill="#f0992e"/>
<rect x="475.0" y="397.7" width="1" height="31.9" fill="#f0992e"/>
<rect x="474.5" y="403.7" width="2" height="11.9" fill="#f0992e"/>
<rect x="477.6" y="402.7" width="1" height="13.9" fill="#ffffff"/>
<rect x="477.1" y="408.7" width="2" height="6.9" fill="#ffffff"/>
<rect x="480.2" y="405.7" width="1" height="13.1" fill="#f0992e"/>
<rect x="479.7" y="408.7" width="2" height="4.1" fill="#f0992e"/>
<rect x="482.8" y="406.8" width="1" height="18.1" fill="#f0992e"/>
<rect x="482.3" y="412.8" width="2" height="3.1" fill="#f0992e"/>
<rect x="485.4" y="412.9" width="1" height="23.9" fill="#f0992e"/>
<rect x="484.9" y="415.9" width="2" height="11.9" fill="#f0992e"/>
<rect x="488.1" y="417.8" width="1" height="14.1" fill="#ffffff"/>
<rect x="487.6" y="423.8" width="2" height="4.1" fill="#ffffff"/>
<rect x="490.7" y="422.8" width="1" height="16.7" fill="#f0992e"/>
<rect x="490.2" y="423.8" width="2" height="6.7" fill="#f0992e"/>
<rect x="493.3" y="428.5" width="1" height="9.8" fill="#f0992e"/>
<rect x="492.8" y="430.5" width="2" height="1.8" fill="#f0992e"/>
<rect x="495.9" y="422.9" width="1" height="13.4" fill="#ffffff"/>
<rect x="495.4" y="426.9" width="2" height="5.4" fill="#ffffff"/>
<rect x="498.5" y="419.1" width="1" height="9.8" fill="#ffffff"/>
<rect x="498.0" y="420.1" width="2" height="6.8" fill="#ffffff"/>
<rect x="501.2" y="418.1" width="1" height="7.1" fill="#f0992e"/>
<rect x="500.7" y="420.1" width="2" height="2.1" fill="#f0992e"/>
<rect x="503.8" y="421.3" width="1" height="9.0" fill="#f0992e"/>
<rect x="503.3" y="422.3" width="2" height="7.0" fill="#f0992e"/>
<rect x="506.4" y="423.3" width="1" height="12.9" fill="#f0992e"/>
<rect x="505.9" y="429.3" width="2" height="2.9" fill="#f0992e"/>
<rect x="509.0" y="429.1" width="1" height="14.3" fill="#f0992e"/>
<rect x="508.5" y="432.1" width="2" height="8.3" fill="#f0992e"/>
<rect x="511.6" y="426.4" width="1" height="29.0" fill="#f0992e"/>
<rect x="511.1" y="440.4" width="2" height="14.0" fill="#f0992e"/>
<rect x="514.3" y="452.4" width="1" height="12.3" fill="#f0992e"/>
<rect x="513.8" y="454.4" width="2" height="7.3" fill="#f0992e"/>
<rect x="516.9" y="446.1" width="1" height="18.5" fill="#ffffff"/>
<rect x="516.4" y="460.1" width="2" height="1.5" fill="#ffffff"/>
<rect x="519.5" y="457.1" width="1" height="4.5" fill="#f0992e"/>
<rect x="519.0" y="460.1" width="2" height="1.0" fill="#f0992e"/>
<rect x="522.1" y="457.7" width="1" height="18.0" fill="#f0992e"/>
<rect x="521.6" y="460.7" width="2" height="12.0" fill="#f0992e"/>
<rect x="524.7" y="469.7" width="1" height="21.9" fill="#f0992e"/>
<rect x="524.2" y="472.7" width="2" height="4.9" fill="#f0992e"/>
<rect x="527.4" y="476.6" width="1" height="19.0" fill="#f0992e"/>
<rect x="526.9" y="477.6" width="2" height="4.0" fill="#f0992e"/>
<rect x="530.0" y="477.5" width="1" height="10.1" fill="#f0992e"/>
<rect x="529.5" y="481.5" width="2" height="4.1" fill="#f0992e"/>
<rect x="532.6" y="471.4" width="1" height="23.3" fill="#ffffff"/>
<rect x="532.1" y="474.4" width="2" height="11.3" fill="#ffffff"/>
<rect x="535.2" y="473.4" width="1" height="17.5" fill="#f0992e"/>
<rect x="534.7" y="474.4" width="2" height="14.5" fill="#f0992e"/>
<rect x="537.8" y="487.0" width="1" height="4.8" fill="#ffffff"/>
<rect x="537.3" y="488.0" width="2" height="1.0" fill="#ffffff"/>
<rect x="540.5" y="486.0" width="1" height="14.1" fill="#f0992e"/>
<rect x="540.0" y="488.0" width="2" height="6.1" fill="#f0992e"/>
<rect x="543.1" y="488.0" width="1" height="9.1" fill="#ffffff"/>
<rect x="542.6" y="490.0" width="2" height="4.1" fill="#ffffff"/>
<rect x="545.7" y="488.0" width="1" height="20.7" fill="#f0992e"/>
<rect x="545.2" y="490.0" width="2" height="15.7" fill="#f0992e"/>
<rect x="548.3" y="496.1" width="1" height="15.5" fill="#ffffff"/>
<rect x="547.8" y="498.1" width="2" height="7.5" fill="#ffffff"/>
<rect x="550.9" y="492.1" width="1" height="19.1" fill="#f0992e"/>
<rect x="550.4" y="498.1" width="2" height="9.1" fill="#f0992e"/>
<rect x="553.6" y="496.5" width="1" height="14.7" fill="#ffffff"/>
<rect x="553.1" y="500.5" width="2" height="6.7" fill="#ffffff"/>
<rect x="556.2" y="489.0" width="1" height="13.5" fill="#ffffff"/>
<rect x="555.7" y="491.0" width="2" height="9.5" fill="#ffffff"/>
<rect x="558.8" y="479.5" width="1" height="13.4" fill="#ffffff"/>
<rect x="558.3" y="481.5" width="2" height="9.4" fill="#ffffff"/>
<rect x="561.4" y="468.0" width="1" height="14.5" fill="#ffffff"/>
<rect x="560.9" y="474.0" width="2" height="7.5" fill="#ffffff"/>
<rect x="564.0" y="457.7" width="1" height="18.3" fill="#ffffff"/>
<rect x="563.5" y="461.7" width="2" height="12.3" fill="#ffffff"/>
<rect x="566.7" y="443.6" width="1" height="24.1" fill="#ffffff"/>
<rect x="566.2" y="452.6" width="2" height="9.1" fill="#ffffff"/>
<rect x="569.3" y="436.1" width="1" height="30.6" fill="#ffffff"/>
<rect x="568.8" y="442.1" width="2" height="10.6" fill="#ffffff"/>
<rect x="571.9" y="291.9" width="1" height="152.2" fill="#ffffff"/>
<rect x="571.4" y="292.9" width="2" height="149.2" fill="#ffffff"/>
<rect x="574.5" y="260.0" width="1" height="34.9" fill="#ffffff"/>
<rect x="574.0" y="266.0" width="2" height="26.9" fill="#ffffff"/>
<rect x="577.1" y="228.4" width="1" height="43.6" fill="#ffffff"/>
<rect x="576.6" y="230.4" width="2" height="35.6" fill="#ffffff"/>
<rect x="579.8" y="217.0" width="1" height="15.4" fill="#ffffff"/>
<rect x="579.3" y="223.0" width="2" height="7.4" fill="#ffffff"/>
<rect x="582.4" y="221.0" width="1" height="12.4" fill="#f0992e"/>
<rect x="581.9" y="223.0" width="2" height="7.4" fill="#f0992e"/>
<rect x="585.0" y="228.4" width="1" height="23.1" fill="#f0992e"/>
<rect x="584.5" y="230.4" width="2" height="19.1" fill="#f0992e"/>
<rect x="587.6" y="247.4" width="1" height="8.0" fill="#f0992e"/>
<rect x="587.1" y="249.4" width="2" height="4.0" fill="#f0992e"/>
<rect x="590.2" y="251.4" width="1" height="11.9" fill="#f0992e"/>
<rect x="589.7" y="253.4" width="2" height="3.9" fill="#f0992e"/>
<rect x="592.9" y="240.8" width="1" height="18.5" fill="#ffffff"/>
<rect x="592.4" y="244.8" width="2" height="12.5" fill="#ffffff"/>
<rect x="595.5" y="237.1" width="1" height="10.7" fill="#ffffff"/>
<rect x="595.0" y="240.1" width="2" height="4.7" fill="#ffffff"/>
<rect x="598.1" y="231.1" width="1" height="12.3" fill="#f0992e"/>
<rect x="597.6" y="240.1" width="2" height="1.0" fill="#f0992e"/>
<rect x="600.7" y="237.4" width="1" height="20.0" fill="#f0992e"/>
<rect x="600.2" y="240.4" width="2" height="11.0" fill="#f0992e"/>
<rect x="603.3" y="242.4" width="1" height="23.2" fill="#f0992e"/>
<rect x="602.8" y="251.4" width="2" height="10.2" fill="#f0992e"/>
<rect x="606.0" y="259.6" width="1" height="4.1" fill="#f0992e"/>
<rect x="605.5" y="261.6" width="2" height="1.1" fill="#f0992e"/>
<rect x="608.6" y="260.2" width="1" height="4.6" fill="#ffffff"/>
<rect x="608.1" y="261.2" width="2" height="1.6" fill="#ffffff"/>
<rect x="611.2" y="260.2" width="1" height="13.7" fill="#f0992e"/>
<rect x="610.7" y="261.2" width="2" height="6.7" fill="#f0992e"/>
<rect x="613.8" y="264.6" width="1" height="12.3" fill="#ffffff"/>
<rect x="613.3" y="265.6" width="2" height="2.3" fill="#ffffff"/>
<rect x="616.4" y="258.9" width="1" height="15.7" fill="#ffffff"/>
<rect x="615.9" y="260.9" width="2" height="4.7" fill="#ffffff"/>
<rect x="619.1" y="251.2" width="1" height="10.7" fill="#ffffff"/>
<rect x="618.6" y="260.2" width="2" height="1.0" fill="#ffffff"/>
<rect x="621.7" y="256.2" width="1" height="8.1" fill="#f0992e"/>
<rect x="621.2" y="260.2" width="2" height="3.1" fill="#f0992e"/>
<rect x="624.3" y="257.4" width="1" height="20.6" fill="#f0992e"/>
<rect x="623.8" y="263.4" width="2" height="8.6" fill="#f0992e"/>
<rect x="626.9" y="260.1" width="1" height="12.8" fill="#ffffff"/>
<rect x="626.4" y="261.1" width="2" height="10.8" fill="#ffffff"/>
<rect x="629.5" y="247.1" width="1" height="18.3" fill="#f0992e"/>
<rect x="629.0" y="261.1" width="2" height="2.3" fill="#f0992e"/>
<rect x="632.2" y="253.1" width="1" height="16.3" fill="#ffffff"/>
<rect x="631.7" y="254.1" width="2" height="9.3" fill="#ffffff"/>
<rect x="634.8" y="248.1" width="1" height="13.3" fill="#f0992e"/>
<rect x="634.3" y="254.1" width="2" height="5.3" fill="#f0992e"/>
<rect x="637.4" y="241.7" width="1" height="20.7" fill="#ffffff"/>
<rect x="636.9" y="247.7" width="2" height="11.7" fill="#ffffff"/>
<rect x="640.0" y="241.7" width="1" height="8.3" fill="#f0992e"/>
<rect x="639.5" y="247.7" width="2" height="1.3" fill="#f0992e"/>
<rect x="642.6" y="245.0" width="1" height="21.9" fill="#f0992e"/>
<rect x="642.1" y="249.0" width="2" height="8.9" fill="#f0992e"/>
<rect x="645.3" y="256.8" width="1" height="10.1" fill="#f0992e"/>
<rect x="644.8" y="257.8" width="2" height="8.1" fill="#f0992e"/>
<rect x="647.9" y="264.9" width="1" height="7.4" fill="#f0992e"/>
<rect x="647.4" y="265.9" width="2" height="3.4" fill="#f0992e"/>
<rect x="650.5" y="265.9" width="1" height="4.5" fill="#ffffff"/>
<rect x="650.0" y="267.9" width="2" height="1.5" fill="#ffffff"/>
<rect x="653.1" y="266.9" width="1" height="3.6" fill="#f0992e"/>
<rect x="652.6" y="267.9" width="2" height="1.0" fill="#f0992e"/>
<rect x="655.7" y="252.9" width="1" height="21.5" fill="#ffffff"/>
<rect x="655.2" y="255.9" width="2" height="12.5" fill="#ffffff"/>
<rect x="658.4" y="249.9" width="1" height="9.0" fill="#ffffff"/>
<rect x="657.9" y="252.9" width="2" height="3.0" fill="#ffffff"/>
<rect x="661.0" y="249.4" width="1" height="12.5" fill="#ffffff"/>
<rect x="660.5" y="250.4" width="2" height="2.5" fill="#ffffff"/>
<rect x="663.6" y="244.4" width="1" height="21.1" fill="#f0992e"/>
<rect x="663.1" y="250.4" width="2" height="9.1" fill="#f0992e"/>
<rect x="666.2" y="255.5" width="1" height="21.9" fill="#f0992e"/>
<rect x="665.7" y="259.5" width="2" height="11.9" fill="#f0992e"/>
<rect x="668.8" y="270.4" width="1" height="16.1" fill="#f0992e"/>
<rect x="668.3" y="271.4" width="2" height="13.1" fill="#f0992e"/>
<rect x="671.5" y="274.6" width="1" height="11.9" fill="#ffffff"/>
<rect x="671.0" y="277.6" width="2" height="6.9" fill="#ffffff"/>
<rect x="674.1" y="262.0" width="1" height="18.6" fill="#ffffff"/>
<rect x="673.6" y="264.0" width="2" height="13.6" fill="#ffffff"/>
<rect x="676.7" y="251.0" width="1" height="15.0" fill="#ffffff"/>
<rect x="676.2" y="260.0" width="2" height="4.0" fill="#ffffff"/>
<rect x="679.3" y="257.0" width="1" height="18.4" fill="#f0992e"/>
<rect x="678.8" y="260.0" width="2" height="11.4" fill="#f0992e"/>
<rect x="681.9" y="263.4" width="1" height="17.1" fill="#ffffff"/>
<rect x="681.4" y="266.4" width="2" height="5.1" fill="#ffffff"/>
<rect x="684.6" y="257.4" width="1" height="15.2" fill="#f0992e"/>
<rect x="684.1" y="266.4" width="2" height="2.2" fill="#f0992e"/>
<rect x="687.2" y="254.6" width="1" height="22.1" fill="#f0992e"/>
<rect x="686.7" y="268.6" width="2" height="4.1" fill="#f0992e"/>
<rect x="689.8" y="271.6" width="1" height="13.2" fill="#f0992e"/>
<rect x="689.3" y="272.6" width="2" height="11.2" fill="#f0992e"/>
<rect x="692.4" y="272.9" width="1" height="14.9" fill="#ffffff"/>
<rect x="691.9" y="275.9" width="2" height="7.9" fill="#ffffff"/>
<rect x="695.0" y="261.3" width="1" height="15.6" fill="#ffffff"/>
<rect x="694.5" y="270.3" width="2" height="5.6" fill="#ffffff"/>
<rect x="697.7" y="249.1" width="1" height="30.3" fill="#ffffff"/>
<rect x="697.2" y="263.1" width="2" height="7.3" fill="#ffffff"/>
<rect x="700.3" y="238.3" width="1" height="27.7" fill="#ffffff"/>
<rect x="699.8" y="241.3" width="2" height="21.7" fill="#ffffff"/>
<rect x="702.9" y="237.3" width="1" height="10.4" fill="#f0992e"/>
<rect x="702.4" y="241.3" width="2" height="4.4" fill="#f0992e"/>
<rect x="705.5" y="241.7" width="1" height="18.8" fill="#f0992e"/>
<rect x="705.0" y="245.7" width="2" height="13.8" fill="#f0992e"/>
<rect x="708.1" y="257.5" width="1" height="16.8" fill="#f0992e"/>
<rect x="707.6" y="259.5" width="2" height="13.8" fill="#f0992e"/>
<rect x="710.8" y="272.3" width="1" height="9.2" fill="#f0992e"/>
<rect x="710.3" y="273.3" width="2" height="5.2" fill="#f0992e"/>
<rect x="713.4" y="260.6" width="1" height="31.9" fill="#ffffff"/>
<rect x="712.9" y="262.6" width="2" height="15.9" fill="#ffffff"/>
<rect x="716.0" y="260.6" width="1" height="12.6" fill="#f0992e"/>
<rect x="715.5" y="262.6" width="2" height="9.6" fill="#f0992e"/>
<rect x="718.6" y="269.2" width="1" height="17.4" fill="#f0992e"/>
<rect x="718.1" y="272.2" width="2" height="12.4" fill="#f0992e"/>
<rect x="721.2" y="280.6" width="1" height="6.5" fill="#f0992e"/>
<rect x="720.7" y="284.6" width="2" height="1.0" fill="#f0992e"/>
<rect x="723.9" y="273.4" width="1" height="14.7" fill="#ffffff"/>
<rect x="723.4" y="276.4" width="2" height="8.7" fill="#ffffff"/>
<rect x="726.5" y="274.4" width="1" height="15.7" fill="#f0992e"/>
<rect x="726.0" y="276.4" width="2" height="11.7" fill="#f0992e"/>
<rect x="729.1" y="282.5" width="1" height="6.6" fill="#ffffff"/>
<rect x="728.6" y="283.5" width="2" height="4.6" fill="#ffffff"/>
<rect x="731.7" y="279.5" width="1" height="34.4" fill="#f0992e"/>
<rect x="731.2" y="283.5" width="2" height="16.4" fill="#f0992e"/>
<rect x="734.3" y="293.9" width="1" height="13.4" fill="#f0992e"/>
<rect x="733.8" y="299.9" width="2" height="4.4" fill="#f0992e"/>
<rect x="737.0" y="296.3" width="1" height="9.0" fill="#ffffff"/>
<rect x="736.5" y="299.3" width="2" height="5.0" fill="#ffffff"/>
<rect x="739.6" y="297.3" width="1" height="8.4" fill="#f0992e"/>
<rect x="739.1" y="299.3" width="2" height="4.4" fill="#f0992e"/>
<rect x="742.2" y="296.0" width="1" height="21.7" fill="#ffffff"/>
<rect x="741.7" y="299.0" width="2" height="4.7" fill="#ffffff"/>
<rect x="744.8" y="293.0" width="1" height="21.7" fill="#f0992e"/>
<rect x="744.3" y="299.0" width="2" height="11.7" fill="#f0992e"/>
<!-- horizontal lines -->
<line x1="61" y1="322.5" x2="923" y2="322.5" stroke="#686868" stroke-width="1"/>
<line x1="61" y1="364" x2="923" y2="364" stroke="#18186e" stroke-width="2.4"/>
<line x1="61" y1="391.5" x2="923" y2="391.5" stroke="#18186e" stroke-width="2.4"/>
<line x1="641" y1="157.8" x2="894" y2="157.8" stroke="#c8c0a8" stroke-width="1.4"/>
<line x1="641" y1="164.3" x2="894" y2="164.3" stroke="#a02020" stroke-width="1" stroke-dasharray="1 2"/>
<line x1="641" y1="314.8" x2="894" y2="314.8" stroke="#d8d8d8" stroke-width="2"/>
<rect x="745.5" y="320" width="82" height="4" fill="#d4b48a"/>
<line x1="641" y1="348" x2="894" y2="348" stroke="#707070" stroke-width="1" stroke-dasharray="2 2"/>
<line x1="641" y1="403.8" x2="894" y2="403.8" stroke="#c8c0a0" stroke-width="1.4"/>
<line x1="641" y1="438.8" x2="894" y2="438.8" stroke="#707070" stroke-width="1" stroke-dasharray="2 2"/>
<line x1="641" y1="452.5" x2="894" y2="452.5" stroke="#7cc548" stroke-width="2"/>
<g font-size="9" fill="#d8bc40">
 <text x="679.7" y="165.5" textLength="80.7" lengthAdjust="spacingAndGlyphs">Daily L+ATR : 1.6939</text>
 <text x="672.5" y="411.5" textLength="80" lengthAdjust="spacingAndGlyphs">Daily H-ATR : 1.6765</text>
</g>
<g font-size="8" fill="#e0e0e0">
 <text x="860.5" y="177">RD</text><text x="877" y="177">HD</text><text x="893" y="177" fill="#9ad048">TD</text>
 <text x="874" y="190">NLB: No</text>
</g>
<path d="M744 132.5h8l-4 4z" fill="#b0b0b0"/>
<g font-size="7.5" fill="#e8e8e8">
 <text x="70.4" y="141.5" textLength="45" lengthAdjust="spacingAndGlyphs">EURNZD@,M15</text><text x="120.5" y="141.5" textLength="89.5" lengthAdjust="spacingAndGlyphs">1.68196 1.68196 1.68169 1.68191</text>
</g>
<path d="M62.5 137.5h5l-2.5 3z" fill="#e8e8e8"/>
<g font-size="8.5">
 <text x="67" y="510.5" fill="#d0b040" textLength="27.3" lengthAdjust="spacingAndGlyphs">Spread</text><text x="94.3" y="510.5" fill="#e8e8e8" textLength="14.7" lengthAdjust="spacingAndGlyphs">:2.2</text>
 <text x="116.5" y="510.5" fill="#d0b040" textLength="22.9" lengthAdjust="spacingAndGlyphs">Today</text><text x="139.4" y="510.5" fill="#e8e8e8" textLength="11.8" lengthAdjust="spacingAndGlyphs">:60</text>
 <text x="162.3" y="510.5" fill="#b8b830" textLength="16.2" lengthAdjust="spacingAndGlyphs">ATR</text><text x="178.5" y="510.5" fill="#e8e8e8" textLength="11.8" lengthAdjust="spacingAndGlyphs">:11</text>
</g>
<!-- colored blocks -->
<rect x="851.5" y="486.7" width="12" height="2.6" fill="#e8c040"/>
<rect x="851.5" y="492" width="12" height="5.5" fill="#8a8a8a"/>
<rect x="864" y="487.8" width="12.8" height="5" fill="#e83020"/>
<rect x="864" y="494.3" width="12.8" height="5" fill="#50c838"/>
<rect x="877.8" y="494.3" width="12.2" height="5" fill="#f0d020"/>
<rect x="890" y="491" width="12" height="2" fill="#e03030"/>
<rect x="892" y="497.5" width="11" height="2" fill="#3040e0"/>
<!-- price axis -->
<g font-size="6.5" fill="#e8e8e8">
<line x1="923" y1="147.3" x2="926" y2="147.3" stroke="#c0c0c0" stroke-width="1"/>
<text x="927" y="150.1" textLength="22.3" lengthAdjust="spacingAndGlyphs">1.69345</text>
<line x1="923" y1="169.1" x2="926" y2="169.1" stroke="#c0c0c0" stroke-width="1"/>
<text x="927" y="171.9" textLength="22.3" lengthAdjust="spacingAndGlyphs">1.69200</text>
<line x1="923" y1="191.0" x2="926" y2="191.0" stroke="#c0c0c0" stroke-width="1"/>
<text x="927" y="193.8" textLength="22.3" lengthAdjust="spacingAndGlyphs">1.69055</text>
<line x1="923" y1="212.8" x2="926" y2="212.8" stroke="#c0c0c0" stroke-width="1"/>
<text x="927" y="215.6" textLength="22.3" lengthAdjust="spacingAndGlyphs">1.68910</text>
<line x1="923" y1="234.6" x2="926" y2="234.6" stroke="#c0c0c0" stroke-width="1"/>
<text x="927" y="237.4" textLength="22.3" lengthAdjust="spacingAndGlyphs">1.68765</text>
<line x1="923" y1="256.4" x2="926" y2="256.4" stroke="#c0c0c0" stroke-width="1"/>
<text x="927" y="259.2" textLength="22.3" lengthAdjust="spacingAndGlyphs">1.68620</text>
<line x1="923" y1="278.3" x2="926" y2="278.3" stroke="#c0c0c0" stroke-width="1"/>
<text x="927" y="281.1" textLength="22.3" lengthAdjust="spacingAndGlyphs">1.68475</text>
<line x1="923" y1="300.1" x2="926" y2="300.1" stroke="#c0c0c0" stroke-width="1"/>
<text x="927" y="302.9" textLength="22.3" lengthAdjust="spacingAndGlyphs">1.68330</text>
<line x1="923" y1="343.8" x2="926" y2="343.8" stroke="#c0c0c0" stroke-width="1"/>
<text x="927" y="346.6" textLength="22.3" lengthAdjust="spacingAndGlyphs">1.68040</text>
<line x1="923" y1="365.6" x2="926" y2="365.6" stroke="#c0c0c0" stroke-width="1"/>
<text x="927" y="368.4" textLength="22.3" lengthAdjust="spacingAndGlyphs">1.67895</text>
<line x1="923" y1="387.4" x2="926" y2="387.4" stroke="#c0c0c0" stroke-width="1"/>
<text x="927" y="390.2" textLength="22.3" lengthAdjust="spacingAndGlyphs">1.67750</text>
<line x1="923" y1="409.3" x2="926" y2="409.3" stroke="#c0c0c0" stroke-width="1"/>
<text x="927" y="412.1" textLength="22.3" lengthAdjust="spacingAndGlyphs">1.67605</text>
<line x1="923" y1="431.1" x2="926" y2="431.1" stroke="#c0c0c0" stroke-width="1"/>
<text x="927" y="433.9" textLength="22.3" lengthAdjust="spacingAndGlyphs">1.67460</text>
<line x1="923" y1="452.9" x2="926" y2="452.9" stroke="#c0c0c0" stroke-width="1"/>
<text x="927" y="455.7" textLength="22.3" lengthAdjust="spacingAndGlyphs">1.67315</text>
<line x1="923" y1="474.8" x2="926" y2="474.8" stroke="#c0c0c0" stroke-width="1"/>
<text x="927" y="477.6" textLength="22.3" lengthAdjust="spacingAndGlyphs">1.67170</text>
<line x1="923" y1="496.6" x2="926" y2="496.6" stroke="#c0c0c0" stroke-width="1"/>
<text x="927" y="499.4" textLength="22.3" lengthAdjust="spacingAndGlyphs">1.67025</text>
<line x1="923" y1="518.4" x2="926" y2="518.4" stroke="#c0c0c0" stroke-width="1"/>
<text x="927" y="521.2" textLength="22.3" lengthAdjust="spacingAndGlyphs">1.66880</text>
</g>
<rect x="924.5" y="317" width="26.5" height="10" fill="#fff" stroke="#aaa" stroke-width="0.6"/>
<text x="927" y="324.5" font-size="6.5" fill="#000">1.68191</text>
<!-- time axis -->
<g font-size="7" fill="#f0f0f0" font-weight="bold">
<line x1="60.9" y1="521" x2="60.9" y2="524" stroke="#c0c0c0"/>
<text x="60.4" y="529" textLength="26.5" lengthAdjust="spacingAndGlyphs">2 Jul 2021</text>
<line x1="102.5" y1="521" x2="102.5" y2="524" stroke="#c0c0c0"/>
<text x="102.0" y="529" textLength="29.2" lengthAdjust="spacingAndGlyphs">2 Jul 20:45</text>
<line x1="144.2" y1="521" x2="144.2" y2="524" stroke="#c0c0c0"/>
<text x="143.7" y="529" textLength="29.2" lengthAdjust="spacingAndGlyphs">5 Jul 00:45</text>
<line x1="185.9" y1="521" x2="185.9" y2="524" stroke="#c0c0c0"/>
<text x="185.4" y="529" textLength="29.2" lengthAdjust="spacingAndGlyphs">5 Jul 04:45</text>
<line x1="228.2" y1="521" x2="228.2" y2="524" stroke="#c0c0c0"/>
<text x="227.7" y="529" textLength="29.2" lengthAdjust="spacingAndGlyphs">5 Jul 08:45</text>
<line x1="270.2" y1="521" x2="270.2" y2="524" stroke="#c0c0c0"/>
<text x="269.7" y="529" textLength="29.2" lengthAdjust="spacingAndGlyphs">5 Jul 12:45</text>
<line x1="312.5" y1="521" x2="312.5" y2="524" stroke="#c0c0c0"/>
<text x="312.0" y="529" textLength="29.2" lengthAdjust="spacingAndGlyphs">5 Jul 16:45</text>
<line x1="354.2" y1="521" x2="354.2" y2="524" stroke="#c0c0c0"/>
<text x="353.7" y="529" textLength="29.2" lengthAdjust="spacingAndGlyphs">5 Jul 20:45</text>
<line x1="395.9" y1="521" x2="395.9" y2="524" stroke="#c0c0c0"/>
<text x="395.4" y="529" textLength="29.2" lengthAdjust="spacingAndGlyphs">6 Jul 00:45</text>
<line x1="438.2" y1="521" x2="438.2" y2="524" stroke="#c0c0c0"/>
<text x="437.7" y="529" textLength="29.2" lengthAdjust="spacingAndGlyphs">6 Jul 04:45</text>
<line x1="480.2" y1="521" x2="480.2" y2="524" stroke="#c0c0c0"/>
<text x="479.7" y="529" textLength="29.2" lengthAdjust="spacingAndGlyphs">6 Jul 08:45</text>
<line x1="522.5" y1="521" x2="522.5" y2="524" stroke="#c0c0c0"/>
<text x="522.0" y="529" textLength="29.2" lengthAdjust="spacingAndGlyphs">6 Jul 12:45</text>
<line x1="565.1" y1="521" x2="565.1" y2="524" stroke="#c0c0c0"/>
<text x="564.6" y="529" textLength="29.2" lengthAdjust="spacingAndGlyphs">6 Jul 16:45</text>
<line x1="606.9" y1="521" x2="606.9" y2="524" stroke="#c0c0c0"/>
<text x="606.4" y="529" textLength="29.2" lengthAdjust="spacingAndGlyphs">6 Jul 20:45</text>
<line x1="648.9" y1="521" x2="648.9" y2="524" stroke="#c0c0c0"/>
<text x="648.4" y="529" textLength="29.2" lengthAdjust="spacingAndGlyphs">7 Jul 00:45</text>
<line x1="691.0" y1="521" x2="691.0" y2="524" stroke="#c0c0c0"/>
<text x="690.5" y="529" textLength="29.2" lengthAdjust="spacingAndGlyphs">7 Jul 04:45</text>
<line x1="733.1" y1="521" x2="733.1" y2="524" stroke="#c0c0c0"/>
<text x="732.6" y="529" textLength="29.2" lengthAdjust="spacingAndGlyphs">7 Jul 08:45</text>
</g>
<!-- tabs -->
<rect x="58" y="534" width="896" height="15" fill="#ededed"/>
<g font-size="9" fill="#a8a8a8">
<text x="67.4" y="545" textLength="54.6" lengthAdjust="spacingAndGlyphs">NZDUSD@,M15</text><text x="136.8" y="545" textLength="53.8" lengthAdjust="spacingAndGlyphs">XAUUSD@,M15</text><text x="205" y="545" textLength="48" lengthAdjust="spacingAndGlyphs">XAGUSD@,H1</text><text x="268" y="545" textLength="60.7" lengthAdjust="spacingAndGlyphs">BRENTCASH,M15</text><text x="345" y="545" textLength="52" lengthAdjust="spacingAndGlyphs">EURGBP@,M15</text><text x="412.7" y="545" textLength="50.3" lengthAdjust="spacingAndGlyphs">EURJPY@,M15</text><text x="478" y="545" textLength="49.7" lengthAdjust="spacingAndGlyphs">GBPJPY@,M15</text><text x="543.6" y="545" textLength="54.3" lengthAdjust="spacingAndGlyphs">EURCAD@,M15</text><text x="611.9" y="545" textLength="54.1" lengthAdjust="spacingAndGlyphs">EURAUD@,M15</text><text x="749" y="545" textLength="53" lengthAdjust="spacingAndGlyphs">EURCHF@,M15</text><text x="816.8" y="545" textLength="54.2" lengthAdjust="spacingAndGlyphs">GBPCAD@,M15</text><text x="886" y="545" textLength="44" lengthAdjust="spacingAndGlyphs">GBPCHF@,N</text>
</g>
<g stroke="#a8a8a8" stroke-width="1">
 <line x1="129.5" y1="537" x2="129.5" y2="546"/><line x1="198.5" y1="537" x2="198.5" y2="546"/><line x1="261.5" y1="537" x2="261.5" y2="546"/><line x1="337.5" y1="537" x2="337.5" y2="546"/><line x1="405.5" y1="537" x2="405.5" y2="546"/><line x1="470.5" y1="537" x2="470.5" y2="546"/><line x1="537.5" y1="537" x2="537.5" y2="546"/><line x1="605.5" y1="537" x2="605.5" y2="546"/><line x1="810.5" y1="537" x2="810.5" y2="546"/><line x1="878.5" y1="537" x2="878.5" y2="546"/>
</g>
<line x1="58" y1="535" x2="954" y2="535" stroke="#6a6a6a" stroke-width="1"/>
<rect x="673.5" y="535" width="68.5" height="13" fill="#fff"/><path d="M673.5 535V548.5H742V535" fill="none" stroke="#222" stroke-width="1.2"/>
<text x="681" y="545" font-size="9" fill="#111" textLength="53.5" lengthAdjust="spacingAndGlyphs">EURNZD@,M15</text>
<path d="M937 539.5v5l-3-2.5z M946 539.5v5l3-2.5z" fill="#222"/>
<!-- status bar -->
<rect x="58" y="549" width="896" height="14" fill="#f5f5f5"/>
<g stroke="#b8b8b8" stroke-width="1">
 <line x1="499.5" y1="550" x2="499.5" y2="562"/><line x1="574" y1="550" x2="574" y2="562"/><line x1="642" y1="550" x2="642" y2="562"/><line x1="688" y1="550" x2="688" y2="562"/><line x1="735.5" y1="550" x2="735.5" y2="562"/><line x1="780.5" y1="550" x2="780.5" y2="562"/><line x1="827" y1="550" x2="827" y2="562"/><line x1="869" y1="550" x2="869" y2="562"/>
</g>
<text x="58.9" y="560" font-size="9" fill="#222" textLength="59.8" lengthAdjust="spacingAndGlyphs">For Help, press F1</text>
<text x="503" y="560" font-size="9" fill="#222" textLength="24.7" lengthAdjust="spacingAndGlyphs">Default</text>
<rect x="873" y="553" width="15" height="8" fill="#5a7890"/><path d="M873 553h15l-15 6z" fill="#7aa050"/><path d="M873 560l15-6" stroke="#c8d8a0" stroke-width="0.8"/>
<text x="890.7" y="560" font-size="9" fill="#222" textLength="37.7" lengthAdjust="spacingAndGlyphs">2141/17 kb</text>
</svg>

</div>

<!-- cursor -->
<svg class="abs" style="left:877px;top:45px" width="14" height="22" viewBox="0 0 14 22">
 <path d="M1.5 1.5v15l3.6-3.4 2.6 6 2.2-1-2.6-5.8h5z" fill="#fff" stroke="#222" stroke-width="1"/>
</svg>

<!-- USERS PANEL -->
<div class="abs panel" style="left:1012px;top:51px;width:336px;height:222px"></div>
<svg class="abs" style="left:1024px;top:56px" width="22" height="18" viewBox="0 0 22 18">
 <g fill="#e8e8ea"><circle cx="7" cy="6" r="2.6"/><circle cx="14.2" cy="6" r="2.6"/><path d="M1.8 14.6c0-2.6 2.6-4 5.2-4s5.2 1.4 5.2 4v.8H1.8z"/><path d="M13 10.7c2.8-.3 7.2.6 7.2 3.9v.8h-6.6v-.8c0-1.5-.3-2.9-.6-3.9z"/></g>
</svg>
<div class="abs txt" style="left:1240px;top:56px;width:76px;text-align:right;font-size:12.5px;color:#e2e2e4;direction:rtl">کاربران (47)</div>
<svg class="abs" style="left:1328px;top:56px" width="8" height="16"><g fill="#e8e8ea"><circle cx="3.8" cy="3.3" r="1.6"/><circle cx="3.8" cy="8.4" r="1.6"/><circle cx="3.8" cy="12.8" r="1.6"/></g></svg>
<div class="abs inner" style="left:1024px;top:81px;width:312px;height:179.5px;overflow:hidden">
</div>
<!-- list rows -->
<svg class="abs" style="left:1030px;top:88px" width="70" height="104" viewBox="1030 88 70 104">
 <rect x="1039" y="93.5" width="5.4" height="9.5" rx="2.7" fill="#2a8ff0"/>
 <path d="M1036.6 99.5a5.1 5.1 0 0 0 10.2 0" fill="none" stroke="#2a8ff0" stroke-width="1.4"/>
 <rect x="1041" y="104.5" width="1.4" height="3" fill="#2a8ff0"/>
 <path d="M1075 95.5h14a1 1 0 0 1 1 1v8.5h-16v-8.5a1 1 0 0 1 1-1z M1075.7 97v6.6h14.6v-6.6z" fill="#e8e8ea" fill-rule="evenodd"/>
 <rect x="1073" y="105.6" width="18.5" height="2" rx="0.5" fill="#e8e8ea"/>
 <circle cx="1044.4" cy="177.4" r="5" fill="#f4f4f6"/>
 <path d="M1036.4 178.2L1043.8 185.6L1039.5 188.6Q1036 189.2 1034 186.8Q1032.8 184.5 1033.6 181.8Z" fill="#f4f4f6"/>
 <path d="M1033 175.6L1047.4 190" stroke="#2d2e32" stroke-width="1.5"/>
</svg>
<div class="abs" style="left:1024px;top:81px;width:312px;height:179px;overflow:hidden"><div class="abs" style="left:-1024px;top:-81px;width:1354px;height:583px"><div class="abs txt" style="left:1150px;top:89.0px;width:156px;height:17px;line-height:17px;text-align:right;font-size:13px;-webkit-text-stroke:0.25px #ececec;color:#ececec;font-weight:bold;">Master</div>
<svg class="abs" style="left:1312px;top:89.0px" width="16" height="16" viewBox="0 0 16 16"><circle cx="8" cy="4.6" r="3" fill="#2a8ff0"/><path d="M1.8 14.2c0-3 3.4-4.4 6.2-4.4s6.2 1.4 6.2 4.4v.9H1.8z" fill="#2a8ff0"/></svg>
<div class="abs txt" style="left:1150px;top:116.8px;width:156px;height:17px;line-height:17px;text-align:right;font-size:13px;-webkit-text-stroke:0.25px #e4e4e4;color:#e4e4e4;">امیر طلابیگی</div>
<svg class="abs" style="left:1312px;top:116.8px" width="16" height="16" viewBox="0 0 16 16"><circle cx="8" cy="4.6" r="3" fill="#f0dc30"/><path d="M1.8 14.2c0-3 3.4-4.4 6.2-4.4s6.2 1.4 6.2 4.4v.9H1.8z" fill="#f0dc30"/></svg>
<div class="abs txt" style="left:1150px;top:144.0px;width:156px;height:17px;line-height:17px;text-align:right;font-size:13px;-webkit-text-stroke:0.25px #e4e4e4;color:#e4e4e4;">saman</div>
<svg class="abs" style="left:1312px;top:144.0px" width="16" height="16" viewBox="0 0 16 16"><circle cx="8" cy="4.6" r="3" fill="#f0dc30"/><path d="M1.8 14.2c0-3 3.4-4.4 6.2-4.4s6.2 1.4 6.2 4.4v.9H1.8z" fill="#f0dc30"/></svg>
<div class="abs txt" style="left:1150px;top:170.2px;width:156px;height:17px;line-height:17px;text-align:right;font-size:13px;-webkit-text-stroke:0.25px #a8a8aa;color:#a8a8aa;">یوسف اسفلائی</div>
<svg class="abs" style="left:1312px;top:170.2px" width="16" height="16" viewBox="0 0 16 16"><circle cx="8" cy="4.6" r="3" fill="#f0dc30"/><path d="M1.8 14.2c0-3 3.4-4.4 6.2-4.4s6.2 1.4 6.2 4.4v.9H1.8z" fill="#f0dc30"/></svg>
<div class="abs txt" style="left:1150px;top:197.6px;width:156px;height:17px;line-height:17px;text-align:right;font-size:13px;-webkit-text-stroke:0.25px #e4e4e4;color:#e4e4e4;">siroos</div>
<svg class="abs" style="left:1312px;top:197.6px" width="16" height="16" viewBox="0 0 16 16"><circle cx="8" cy="4.6" r="3" fill="#f0dc30"/><path d="M1.8 14.2c0-3 3.4-4.4 6.2-4.4s6.2 1.4 6.2 4.4v.9H1.8z" fill="#f0dc30"/></svg>
<div class="abs txt" style="left:1150px;top:224.7px;width:156px;height:17px;line-height:17px;text-align:right;font-size:13px;-webkit-text-stroke:0.25px #e4e4e4;color:#e4e4e4;">ghorbani</div>
<svg class="abs" style="left:1312px;top:224.7px" width="16" height="16" viewBox="0 0 16 16"><circle cx="8" cy="4.6" r="3" fill="#f0dc30"/><path d="M1.8 14.2c0-3 3.4-4.4 6.2-4.4s6.2 1.4 6.2 4.4v.9H1.8z" fill="#f0dc30"/></svg>
<div class="abs txt" style="left:1150px;top:251.5px;width:156px;height:17px;line-height:17px;text-align:right;font-size:13px;-webkit-text-stroke:0.25px #e4e4e4;color:#e4e4e4;">بلاغت</div>
<svg class="abs" style="left:1312px;top:251.5px" width="16" height="16" viewBox="0 0 16 16"><circle cx="8" cy="4.6" r="3" fill="#f0dc30"/><path d="M1.8 14.2c0-3 3.4-4.4 6.2-4.4s6.2 1.4 6.2 4.4v.9H1.8z" fill="#f0dc30"/></svg></div></div>


<!-- CHAT PANEL -->
<div class="abs panel" style="left:1012px;top:282px;width:336px;height:292px"></div>
<svg class="abs" style="left:1025px;top:287px" width="20" height="18" viewBox="0 0 20 18">
 <path d="M2 2h15v11.5H5L2 16.5z" fill="#e8e8ea"/>
 <path d="M4.5 5h10M4.5 8h10M4.5 11h6.5" stroke="#8a8a8d" stroke-width="1.3"/>
</svg>
<svg class="abs" style="left:1328px;top:287px" width="8" height="16"><g fill="#e8e8ea"><circle cx="3.8" cy="3.3" r="1.6"/><circle cx="3.8" cy="7.8" r="1.6"/><circle cx="3.8" cy="13.2" r="1.6"/></g></svg>
<div class="abs inner" style="left:1023px;top:312px;width:313px;height:211px"></div>
<div class="abs msg" style="left:1184px;top:313px;width:150px;height:12.5px"></div>
<div class="abs msg" style="left:1184px;top:331.5px;width:150px;height:58.5px"></div>
<div class="abs msg" style="left:1184px;top:396.5px;width:150px;height:58.5px"></div>
<div class="abs msg" style="left:1184px;top:461.5px;width:150px;height:58.5px"></div>
<div class="abs txt" style="left:1200px;top:338px;width:129px;text-align:right;font-size:13px">Nikfar</div>
<div class="abs txt" style="left:1200px;top:364px;width:129px;text-align:right;font-size:13px">سپاس</div>
<div class="abs txt" style="left:1200px;top:403px;width:129px;text-align:right;font-size:13px">Master</div>
<div class="abs txt" style="left:1189px;top:430px;font-size:13px">HVHN</div>
<div class="abs txt" style="left:1200px;top:468px;width:129px;text-align:right;font-size:13px">Master</div>
<div class="abs txt" style="left:1200px;top:494px;width:129px;text-align:right;font-size:13px">ارادت</div>
<div class="abs inner" style="left:1023px;top:529px;width:313px;height:34px"></div>
<svg class="abs" style="left:1025px;top:535px" width="48" height="22" viewBox="1025 535 48 22">
 <path d="M1027.5 545.3l16.3-7.2-3.5 7.4 3.5 6.9z" fill="#e8e8ea"/>
 <path d="M1031 545.4h9" stroke="#2d2e32" stroke-width="0.8"/>
 <circle cx="1059.2" cy="545.2" r="7" fill="none" stroke="#e8e8ea" stroke-width="1.5"/>
 <circle cx="1056.6" cy="543" r="1.1" fill="#e8e8ea"/><circle cx="1061.8" cy="543" r="1.1" fill="#e8e8ea"/>
 <path d="M1055.5 546.5a3.8 3.8 0 0 0 7.4 0z" fill="#e8e8ea"/>
</svg>
<div class="abs txt" style="left:1160px;top:538px;width:170px;text-align:right;font-size:12.5px;color:#8a8b8e;direction:rtl">پیام خود را وارد کنید</div>

</body></html>
